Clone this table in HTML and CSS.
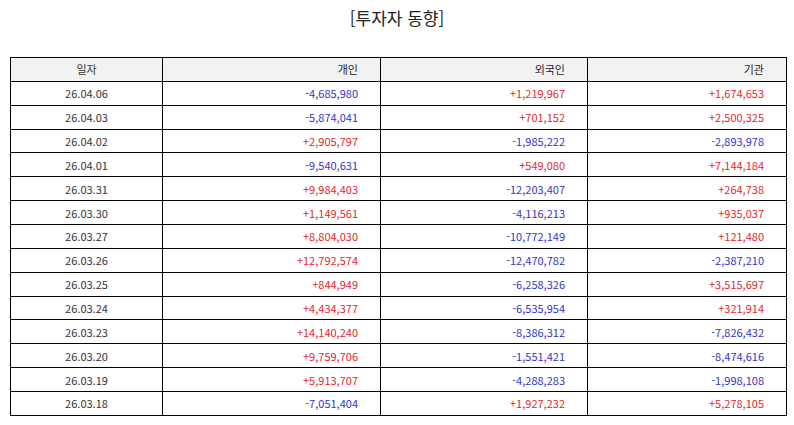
FILE: index.html
```html
<!DOCTYPE html>
<html lang="ko">
<head>
<meta charset="utf-8">
<link rel="stylesheet" href="styles.css">
</head>
<body>
<div class="title">[투자자 동향]</div>
<table class="grid">
<colgroup><col class="c1"><col class="c2"><col class="c3"><col class="c4"></colgroup>
<thead>
<tr><th class="date">일자</th><th>개인</th><th>외국인</th><th>기관</th></tr>
</thead>
<tbody>
<tr><td class="date">26.04.06</td><td class="dn">-4,685,980</td><td class="up">+1,219,967</td><td class="up">+1,674,653</td></tr>
<tr><td class="date">26.04.03</td><td class="dn">-5,874,041</td><td class="up">+701,152</td><td class="up">+2,500,325</td></tr>
<tr><td class="date">26.04.02</td><td class="up">+2,905,797</td><td class="dn">-1,985,222</td><td class="dn">-2,893,978</td></tr>
<tr><td class="date">26.04.01</td><td class="dn">-9,540,631</td><td class="up">+549,080</td><td class="up">+7,144,184</td></tr>
<tr><td class="date">26.03.31</td><td class="up">+9,984,403</td><td class="dn">-12,203,407</td><td class="up">+264,738</td></tr>
<tr><td class="date">26.03.30</td><td class="up">+1,149,561</td><td class="dn">-4,116,213</td><td class="up">+935,037</td></tr>
<tr><td class="date">26.03.27</td><td class="up">+8,804,030</td><td class="dn">-10,772,149</td><td class="up">+121,480</td></tr>
<tr><td class="date">26.03.26</td><td class="up">+12,792,574</td><td class="dn">-12,470,782</td><td class="dn">-2,387,210</td></tr>
<tr><td class="date">26.03.25</td><td class="up">+844,949</td><td class="dn">-6,258,326</td><td class="up">+3,515,697</td></tr>
<tr><td class="date">26.03.24</td><td class="up">+4,434,377</td><td class="dn">-6,535,954</td><td class="up">+321,914</td></tr>
<tr><td class="date">26.03.23</td><td class="up">+14,140,240</td><td class="dn">-8,386,312</td><td class="dn">-7,826,432</td></tr>
<tr><td class="date">26.03.20</td><td class="up">+9,759,706</td><td class="dn">-1,551,421</td><td class="dn">-8,474,616</td></tr>
<tr><td class="date">26.03.19</td><td class="up">+5,913,707</td><td class="dn">-4,288,283</td><td class="dn">-1,998,108</td></tr>
<tr><td class="date">26.03.18</td><td class="dn">-7,051,404</td><td class="up">+1,927,232</td><td class="up">+5,278,105</td></tr>
</tbody>
</table>
</body>
</html>
```
FILE: styles.css
```css
html, body {
  margin: 0;
  padding: 0;
  background: #ffffff;
}
body {
  font-family: "Noto Sans CJK KR", "Noto Sans", sans-serif;
  color: #333333;
}
.title {
  text-align: center;
  font-size: 17px;
  line-height: 22px;
  padding-top: 7px;
  height: 57px;
  box-sizing: border-box;
  color: #222222;
}
.grid {
  margin: 0 8px 0 10px;
  width: 776px;
  border-collapse: collapse;
  table-layout: fixed;
  font-size: 11px;
}
.c1 { width: 152px; }
.c2 { width: 218px; }
.c3 { width: 207px; }
.c4 { width: 199px; }
.grid th, .grid td {
  border: 1px solid #000000;
  height: 22.87px;
  padding: 0 22px 0 4px;
  text-align: right;
  font-weight: normal;
  line-height: 14px;
  white-space: nowrap;
}
.grid th {
  background: #f2f2f2;
  color: #222222;
}
.grid .date {
  text-align: center;
  padding: 0;
  color: #333333;
}
.up { color: #e3262f; }
.dn { color: #3434c8; }
```
